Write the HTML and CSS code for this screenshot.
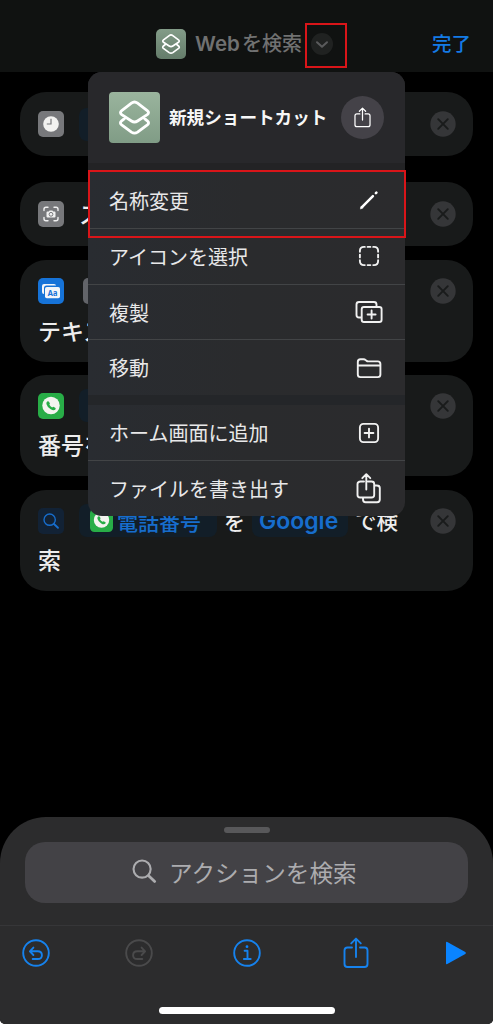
FILE: index.html
```html
<!DOCTYPE html>
<html lang="ja">
<head>
<meta charset="utf-8">
<title>Webを検索</title>
<link rel="stylesheet" href="styles.css">
</head>
<body>
<svg class="defs" width="0" height="0">
  <symbol id="stack" viewBox="0 0 50 50"><path d="M12.500 18.200 22 11q3-2.300 6 0l9.500 7.200q2.500 2 0 4L28 28.400q-3 2.100-6 0L12.500 22.200q-2.500-2 0-4ZM15.500 25.800 12.400 28.300q-2.400 2 0 3.900L22 39.300q3 2.100 6 0l9.600-7.100q2.400-1.900 0-3.900L34.500 25.800" fill="none" stroke="#fff" stroke-width="2.800" stroke-linejoin="round"/></symbol>
  <symbol id="share" viewBox="0 0 26 32"><path d="M9 10.500H4.500Q1.500 10.500 1.500 13.500V27Q1.500 30 4.500 30h17q3 0 3-3V13.500q0-3-3-3H17M13 20V1.800M8.200 6.400 13 1.600l4.800 4.800" fill="none" stroke="currentColor" stroke-width="1.900" stroke-linecap="round" stroke-linejoin="round"/></symbol>
  <symbol id="close" viewBox="0 0 26 26"><circle cx="13" cy="13" r="12.700" fill="#353638"/><path d="m8.200 8.200 9.600 9.600m0-9.600-9.600 9.600" stroke="#191b1b" stroke-width="1.900" stroke-linecap="round"/></symbol>
  <symbol id="phone" viewBox="0 0 26 26"><rect width="26" height="26" rx="5" fill="#28ad47"/><circle cx="13" cy="12.500" r="8.700" fill="#f4f4f0"/><path d="M9.200 8.600q1-.900 1.900.300l.700 1.300q.400.700-.500 1.400.900 1.900 2.900 2.900.900-1 1.600-.500l1.400.800q1 .700.200 1.700-1.600 1.700-4.700-.200-3.500-2.300-4.300-5.400-.200-1.500.800-2.300Z" fill="#28ad47"/></symbol>
  <symbol id="magnifier" viewBox="0 0 26 26"><circle cx="10.500" cy="10.500" r="8.900" fill="none" stroke="currentColor" stroke-width="2.200"/><path d="m17.300 17.300 6.300 6" stroke="currentColor" stroke-width="2.900" stroke-linecap="round"/></symbol>
</svg>

<header class="nav">
  <div class="nav-title">
    <svg class="app-icon" viewBox="0 0 50 50"><use href="#stack"/></svg>
    <span class="latin">Web</span><span>を検索</span>
  </div>
  <div class="nav-toggle">
    <svg width="22" height="22" viewBox="0 0 22 22"><circle cx="11" cy="11" r="11" fill="#202221"/><path d="m6 9.200 5 4.600 5-4.600" fill="none" stroke="#5a5b5c" stroke-width="2" stroke-linecap="round" stroke-linejoin="round"/></svg>
  </div>
  <div class="done">完了</div>
</header>

<main class="actions">
  <section class="card single">
    <svg class="tile" viewBox="0 0 26 26"><rect width="26" height="26" rx="5" fill="#77787b"/><circle cx="13" cy="13" r="7.800" fill="#f2f2f0"/><path d="M13 7.800V13H8.800" fill="none" stroke="#77787b" stroke-width="1.200"/></svg>
    <span class="pill pill-one"></span>
    <svg class="close"><use href="#close"/></svg>
  </section>
  <section class="card single second">
    <svg class="tile" viewBox="0 0 26 26"><rect width="26" height="26" rx="5" fill="#77787b"/><path d="M6 9.500V8.200Q6 6.200 8 6.200h2M16 6.200h2q2 0 2 2v1.300M20 16.500v1.300q0 2-2 2h-2M10 19.800H8q-2 0-2-2v-1.300" fill="none" stroke="#f0f0f0" stroke-width="1.400" stroke-linecap="round"/><path d="M9.500 10.500h1.300l.8-1h2.800l.8 1h1.300q1 0 1 1v4q0 1-1 1h-7q-1 0-1-1v-4q0-1 1-1Z" fill="#f0f0f0"/><circle cx="13" cy="13.300" r="1.900" fill="none" stroke="#77787b"/></svg>
    <span class="word">ス</span>
    <svg class="close"><use href="#close"/></svg>
  </section>
  <section class="card">
    <div class="line">
      <svg class="tile" viewBox="0 0 26 26"><rect width="26" height="26" rx="5" fill="#1673d8"/><path d="M4 14V8q0-2 2-2h10q2 0 2 1.500H8.500Q6 7.500 6 10v6q-2 0-2-2Z" fill="#f3f5f8"/><rect x="7" y="9" width="15" height="11.300" rx="1.800" fill="#f3f5f8"/><text class="glyph" x="14.500" y="17.700" text-anchor="middle">Aa</text></svg>
      <span class="pill pill-gray"></span>
      <svg class="close"><use href="#close"/></svg>
    </div>
    <div class="line">テキス</div>
  </section>
  <section class="card">
    <div class="line">
      <svg class="tile"><use href="#phone"/></svg>
      <span class="pill"></span>
      <svg class="close"><use href="#close"/></svg>
    </div>
    <div class="line">番号を</div>
  </section>
  <section class="card">
    <div class="line">
      <svg class="tile" viewBox="0 0 26 26"><rect width="26" height="26" rx="5" fill="#122235"/><g color="#176dcc"><use href="#magnifier" x="5" y="5" width="16.500" height="16.500"/></g></svg>
      <span class="pill pill-phone"><svg width="23" height="23"><use href="#phone"/></svg>電話番号</span>
      <span class="particle">を</span>
      <span class="pill pill-google">Google</span>
      <span class="tail">で検</span>
      <svg class="close"><use href="#close"/></svg>
    </div>
    <div class="line">索</div>
  </section>
</main>

<aside class="menu">
  <div class="menu-head">
    <svg class="menu-app" viewBox="0 0 50 50"><use href="#stack"/></svg>
    <strong>新規ショートカット</strong>
    <span class="round"><svg width="17" height="21"><use href="#share"/></svg></span>
  </div>
  <div class="row first">名称変更
    <svg viewBox="0 0 28 28"><path d="m6.700 21.400 11.200-11.200" stroke="#fff" stroke-width="2.500"/><path d="m5.400 22.700.9-2.700 1.700 1.700Z" fill="#fff" stroke="#fff" stroke-width=".5"/><path d="m20.900 7.200.5-.5" stroke="#fff" stroke-width="2.600" stroke-linecap="round"/></svg></div>
  <div class="row">アイコンを選択
    <svg viewBox="0 0 28 28"><path d="M4.900 9.800V9Q4.900 4.900 9 4.900h.8M12.600 4.900h2.800M18.200 4.900h.8q4.100 0 4.100 4.100v.8M23.100 12.600v2.800M23.100 18.200v.8q0 4.100-4.100 4.100h-.8M15.400 23.100h-2.800M9.800 23.100H9q-4.100 0-4.100-4.100v-.8M4.900 15.400v-2.800"/></svg></div>
  <div class="row">複製
    <svg viewBox="0 0 28 28"><path d="M6.500 19.500H4q-2.500 0-2.500-2.500V6.500Q1.500 4 4 4h15q2.500 0 2.500 2.500V9M9 9h15.300q2.300 0 2.300 2.300v10.400q0 2.300-2.300 2.300H9q-2.300 0-2.300-2.300V11.300Q6.700 9 9 9ZM16.600 12.500v8M12.600 16.500h8"/></svg></div>
  <div class="row">移動
    <svg viewBox="0 0 28 28"><path d="M2.800 20.500V8q0-2.700 2.700-2.700h3q1.300 0 2.200.8l.8.700q.7.600 1.700.6h9.600q2.600 0 2.600 2.600v10.500q0 2.600-2.600 2.600H5.500q-2.700 0-2.700-2.600ZM2.800 11.500h22.600"/></svg></div>
  <div class="row group">ホーム画面に追加
    <svg viewBox="0 0 28 28"><rect x="4.900" y="4.900" width="18.200" height="18.200" rx="3.500"/><path d="M14 9.600v8.800M9.600 14h8.800"/></svg></div>
  <div class="row">ファイルを書き出す
    <svg class="tall" viewBox="0 0 28 32"><path d="M9 9.500H5.500Q2.500 9.500 2.500 12v11q0 2.500 2.700 2.500h11.300q2.700 0 2.700-2.500V12q0-2.500-2.700-2.500H13M11.300 17.500V2.500M7.300 6.200l4-4 4 4M19.200 13.500h2.600q3 0 3 2.500v11.500q0 2.700-2.700 2.700H10.500q-2.500 0-2.500-3v-1.700"/></svg></div>
</aside>

<div class="mark mark-toggle"></div>
<div class="mark mark-rename"></div>

<footer class="sheet">
  <div class="grabber"></div>
  <div class="search"><svg width="25" height="25"><use href="#magnifier"/></svg><span>アクションを検索</span></div>
  <nav class="tools">
    <svg viewBox="0 0 28 28"><circle cx="14" cy="14" r="12.800"/><path d="M10.700 20h5q4.200 0 4.200-3.800 0-3.900-4.200-3.900H8.200M11.400 8.600l-3.500 3.700 3.500 3.700"/></svg>
    <svg class="off" viewBox="0 0 28 28"><circle cx="14" cy="14" r="12.800"/><path d="M17.300 20h-5q-4.200 0-4.200-3.800 0-3.900 4.200-3.900h7.500M16.600 8.600l3.500 3.700-3.500 3.700"/></svg>
    <svg viewBox="0 0 28 28"><circle cx="14" cy="14" r="12.800"/><path d="M11.600 11.800h2.900v8M10.900 20h6.800"/><circle cx="14" cy="7.700" r="1.400" class="solid"/></svg>
    <svg class="share" viewBox="0 0 26 32"><use href="#share"/></svg>
    <svg class="play" viewBox="0 0 22 26"><path class="solid" d="M1 2.800v20.400q0 1.500 1.300.8l18-10.100q1.300-.9 0-1.800L2.300 2Q1 1.300 1 2.800Z"/></svg>
  </nav>
  <div class="home"></div>
</footer>
</body>
</html>
```
FILE: styles.css
```css
* { box-sizing: border-box; }
html { background: #fff; }
body {
  position: relative;
  display: flex;
  flex-direction: column;
  width: 493px;
  height: 1024px;
  margin: 0;
  overflow: hidden;
  border-radius: 0 0 5px 5px;
  background: #000;
  color: #ededed;
  font-family: Inter, "Noto Sans CJK JP", sans-serif;
}
svg { display: block; flex: none; }
.defs { position: absolute; }

.nav {
  display: flex;
  align-items: center;
  height: 72px;
  padding: 15px 22px 0 156px;
  background: #101211;
}
.nav-title {
  display: flex;
  align-items: center;
  color: #707171;
  font-size: 20px;
  font-weight: 500;
  line-height: 30px;
}
.app-icon {
  width: 30px;
  height: 30px;
  margin-right: 9px;
  border-radius: 5px;
  background: linear-gradient(#839c88, #647c6a);
}
.latin { width: 47px; font-size: 20.500px; font-weight: 600; }
.nav-toggle { margin-left: 9px; }
.done { margin-left: auto; padding-bottom: 2px; color: #147be6; font-size: 19.500px; font-weight: 500; }

.actions { display: flex; flex-direction: column; padding: 20px 20px 0; }
.card {
  height: 101.500px;
  margin-bottom: 13.300px;
  padding: 11px 17px 0 18px;
  border-radius: 26px;
  background: #181a1a;
  font-size: 23px;
  font-weight: 500;
}
.single {
  display: flex;
  align-items: center;
  height: 64px;
  margin-bottom: 26px;
  padding-top: 0;
}
.second { margin-bottom: 14px; }
.line { display: flex; align-items: center; height: 40px; white-space: nowrap; }
.line + .line { height: 37px; }
.tile { width: 26px; height: 26px; }
.close { width: 26px; height: 26px; margin-left: auto; }
.word { margin-left: 15px; padding-bottom: 2px; }
.glyph { fill: #1673d8; font: 700 7.500px Inter, sans-serif; }
.pill {
  display: flex;
  align-items: center;
  width: 138px;
  height: 33px;
  margin-left: 15px;
  border-radius: 8px;
  background: #121e28;
  color: #176dcc;
}
.pill-one { width: 100px; }
.pill-gray { width: 26px; height: 26px; margin-left: 19px; border-radius: 5px; background: #626469; }
.pill-phone { gap: 4px; padding-left: 11px; font-size: 21px; }
.particle { margin-left: 7px; font-size: 21px; }
.pill-google { width: 96px; margin-left: 7px; padding-left: 7px; font-size: 23px; font-weight: 600; }
.tail { margin-left: 7px; padding-bottom: 2px; font-size: 21.500px; }

.menu {
  position: absolute;
  left: 88px;
  top: 72px;
  width: 317px;
  height: 444px;
  overflow: hidden;
  border-radius: 14px;
  background: linear-gradient(90deg, #292c31, #2a2b2d 50%, #2b2b2d);
}
.menu-head {
  display: flex;
  align-items: center;
  height: 91px;
  padding: 0 21px 0 20.500px;
  background: #28282b;
}
.menu-app { width: 51px; height: 51px; border-radius: 4px; background: linear-gradient(#9ab49d, #809c86); }
.menu-head strong { margin-left: 9.500px; padding-bottom: 2px; color: #f7f7f7; font-size: 17.600px; font-weight: 700; white-space: nowrap; }
.round {
  display: flex;
  align-items: center;
  justify-content: center;
  width: 43px;
  height: 43px;
  margin-left: auto;
  border-radius: 50%;
  background: #444248;
  color: #fff;
}
.row {
  display: flex;
  align-items: center;
  justify-content: space-between;
  height: 55.700px;
  padding: 0 22px 0 21px;
  border-top: 1px solid #424446;
  color: #e8e8e9;
  font-size: 20px;
}
.row svg { width: 28px; height: 28px; fill: none; stroke: #f1f1f1; stroke-width: 1.900; stroke-linecap: round; stroke-linejoin: round; }
.row .tall { height: 32px; }
.first { height: 65px; padding-top: 1px; border-top: 8px solid #232325; }
.group { height: 65px; border-top: 10px solid #242629; }

.mark { position: absolute; border: 2px solid #d91519; }
.mark-toggle { left: 305px; top: 23px; width: 42px; height: 45px; }
.mark-rename { left: 88px; top: 169.500px; width: 318px; height: 68px; }

.sheet {
  display: flex;
  flex-direction: column;
  align-items: center;
  height: 207px;
  margin-top: auto;
  border-radius: 46px 46px 0 0;
  background: #2c2c2d;
}
.grabber { width: 46px; height: 6px; margin-top: 10px; border-radius: 3px; background: #58585a; }
.search {
  display: flex;
  align-items: center;
  gap: 12px;
  width: 443px;
  height: 61px;
  margin-top: 9px;
  padding: 0 0 2px 107px;
  border-radius: 20px;
  background: #434246;
  color: #acacaf;
  font-size: 23.600px;
}
.tools {
  display: grid;
  grid-template-columns: 28px 28px 28px 28px 22px;
  column-gap: 75px 80px;
  align-items: center;
  width: 493px;
  height: 55px;
  margin-top: 22px;
  padding: 0 0 0 22px;
  border-top: 1px solid #363638;
  color: #1682ed;
}
.tools { grid-template-columns: 103px 108px 107.500px 104px 22px; column-gap: 0; }
.tools svg { width: 28px; height: 28px; fill: none; stroke: #1682ed; stroke-width: 1.900; stroke-linecap: round; stroke-linejoin: round; }
.tools .off { stroke: #4a4a4b; }
.tools .share { width: 26px; height: 32px; margin-left: 2px; }
.tools .play { width: 22px; height: 26px; stroke: none; }
.tools .solid { fill: #0a84ff; stroke: none; }
.home { width: 176px; height: 7px; margin-top: 27px; border-radius: 4px; background: #fff; }
```
